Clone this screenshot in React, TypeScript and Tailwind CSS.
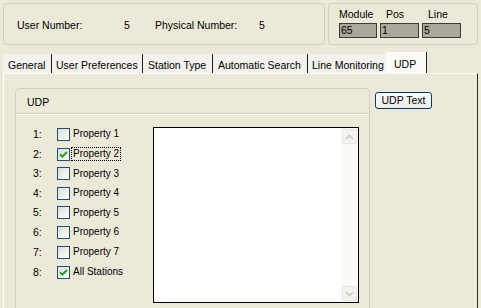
import React from "react";

function Check({ checked }: { checked?: boolean }) {
  return (
    <div className="w-[13px] h-[13px] border border-[#1C5180] bg-gradient-to-br from-[#DCDCD5] to-[#FFFFFF] flex items-center justify-center shrink-0">
      {checked && (
        <svg width="9" height="9" viewBox="0 0 9 9">
          <path d="M1 4.2 L3.4 6.6 L8 2" stroke="#21A121" strokeWidth="2" fill="none" />
        </svg>
      )}
    </div>
  );
}

const rows = [
  { n: "1:", label: "Property 1", checked: false, h: "h-[20px]" },
  { n: "2:", label: "Property 2", checked: true, focus: true, h: "h-[20px]" },
  { n: "3:", label: "Property 3", checked: false, h: "h-[19px]" },
  { n: "4:", label: "Property 4", checked: false, h: "h-[20px]" },
  { n: "5:", label: "Property 5", checked: false, h: "h-[19px]" },
  { n: "6:", label: "Property 6", checked: false, h: "h-[20px]" },
  { n: "7:", label: "Property 7", checked: false, h: "h-[20px]" },
  { n: "8:", label: "All Stations", checked: true, h: "h-[20px]" },
];

const tabs = [
  { t: "General", w: "w-[49px]", pl: "pl-[5px]" },
  { t: "User Preferences", w: "w-[91px]", pl: "pl-[4px]" },
  { t: "Station Type", w: "w-[70px]", pl: "pl-[5px]" },
  { t: "Automatic Search", w: "w-[95px]", pl: "pl-[5px]" },
];

export default function App() {
  return (
    <div className="w-[481px] h-[308px] overflow-hidden bg-[#ECE9D8] text-black font-['Liberation_Sans',Arial,sans-serif] text-[10.5px] leading-none">
      <div className="flex px-[3px] pt-[3px] gap-[3px]">
        <div className="w-[322px] h-[42px] border border-[#D0D0BF] rounded-[4px] flex items-center pl-[13px] pt-[3px]">
          <span className="w-[107px]">User Number:</span>
          <span className="w-[31px]">5</span>
          <span className="w-[104px]">Physical Number:</span>
          <span>5</span>
        </div>
        <div className="w-[150px] h-[42px] border border-[#D0D0BF] rounded-[4px] flex pl-[10px] pt-[3px] gap-[3px]">
          <div className="flex flex-col w-[38px]">
            <span className="h-[14px] leading-[14px]">Module</span>
            <div className="mt-[2px] h-[15px] bg-[#A9A89B] border border-[#3C3C36] pl-[1px] leading-[13px]">65</div>
          </div>
          <div className="flex flex-col w-[39px]">
            <span className="h-[14px] leading-[14px] pl-[6px]">Pos</span>
            <div className="mt-[2px] h-[15px] bg-[#A9A89B] border border-[#3C3C36] pl-[1px] leading-[13px]">1</div>
          </div>
          <div className="flex flex-col w-[39px]">
            <span className="h-[14px] leading-[14px] pl-[6px]">Line</span>
            <div className="mt-[2px] h-[15px] bg-[#A9A89B] border border-[#3C3C36] pl-[1px] leading-[13px]">5</div>
          </div>
        </div>
      </div>

      <div className="mt-[6px] h-[22px] flex items-end px-[3px]">
        {tabs.map((t) => (
          <div key={t.t} className={`${t.w} ${t.pl} h-[19px] pt-[3px] bg-[#F3F2EC] border-r border-[#1E1E1E] flex items-center whitespace-nowrap`}>
            {t.t}
          </div>
        ))}
        <div className="w-[78px] pl-[4px] h-[19px] pt-[3px] bg-[#F3F2EC] flex items-center whitespace-nowrap">Line Monitoring</div>
        <div className="w-[41px] pl-[8px] h-[21px] pt-[3px] bg-[#FBFBF8] border-r border-[#1E1E1E] flex items-center whitespace-nowrap">UDP</div>
      </div>

      <div className="mx-[3px] w-[475px] h-[240px] border-l border-t border-l-white border-t-[#FAFAF7] border-r border-r-[#2A2A2A] bg-[#ECE9D8] flex pl-[11px] pt-[14px]">
        <div className="w-[355px] h-[230px] border border-[#D0D0BF] rounded-t-[4px] flex flex-col">
          <div className="h-[25px] border-b border-b-[#D6D3C2] shadow-[0_1px_0_#FFFFFF] flex items-center pl-[11px] pt-[3px]">UDP</div>
          <div className="flex pl-[17px] pt-[10px]">
            <div className="w-[120px] flex flex-col">
              {rows.map((r) => (
                <div key={r.n} className={`${r.h} flex items-center`}>
                  <span className="w-[24px]">{r.n}</span>
                  <Check checked={r.checked} />
                  <span
                    className={`ml-[2px] text-[10px] px-[1px] leading-[12px] whitespace-nowrap ${
                      r.focus ? "outline outline-1 outline-dotted outline-black" : ""
                    }`}
                  >
                    {r.label}
                  </span>
                </div>
              ))}
            </div>
            <div className="mt-[3px] w-[206px] h-[176px] border border-black bg-white flex justify-end">
              <div className="w-[17px] h-full bg-[#FAFAF7] flex flex-col justify-between items-center py-[1px]">
                <div className="w-[15px] h-[15px] rounded-[2px] border border-[#E8E8E2] bg-[#F3F3EE] flex items-center justify-center">
                  <svg width="9" height="6" viewBox="0 0 9 6">
                    <path d="M1 5 L4.5 1.5 L8 5" stroke="#C8C8C0" strokeWidth="1.6" fill="none" />
                  </svg>
                </div>
                <div className="w-[15px] h-[15px] rounded-[2px] border border-[#E8E8E2] bg-[#F3F3EE] flex items-center justify-center">
                  <svg width="9" height="6" viewBox="0 0 9 6">
                    <path d="M1 1 L4.5 4.5 L8 1" stroke="#C8C8C0" strokeWidth="1.6" fill="none" />
                  </svg>
                </div>
              </div>
            </div>
          </div>
        </div>
        <div className="ml-[5px] mt-[4px]">
          <div className="w-[57px] h-[17px] rounded-[3px] border border-[#003C74] bg-gradient-to-b from-white to-[#ECEBE6] flex items-center justify-center whitespace-nowrap">
            UDP Text
          </div>
        </div>
      </div>
    </div>
  );
}
